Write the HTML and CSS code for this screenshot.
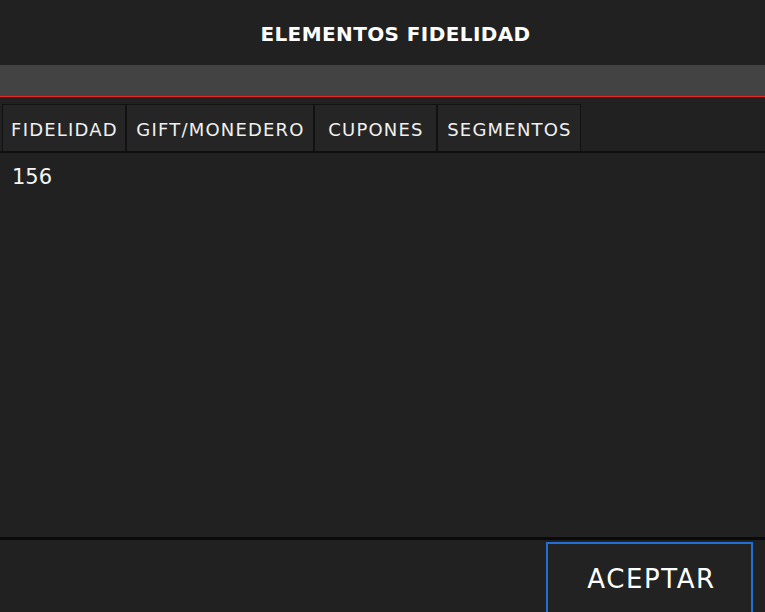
FILE: index.html
```html
<!DOCTYPE html>
<html lang="es">
<head>
<meta charset="utf-8">
<title>Elementos Fidelidad</title>
<link rel="stylesheet" href="styles.css">
</head>
<body>
<div class="dialog">
  <header class="header">
    <h1 class="title">ELEMENTOS FIDELIDAD</h1>
  </header>
  <div class="greybar"></div>
  <nav class="tabs">
    <div class="tab tab-fidelidad">FIDELIDAD</div>
    <div class="tab tab-gift">GIFT/MONEDERO</div>
    <div class="tab tab-cupones">CUPONES</div>
    <div class="tab tab-segmentos">SEGMENTOS</div>
  </nav>
  <main class="content">
    <div class="value">156</div>
  </main>
  <footer class="footer">
    <button class="btn-accept">ACEPTAR</button>
  </footer>
</div>
</body>
</html>
```
FILE: styles.css
```css
* { box-sizing: border-box; }
html, body {
  margin: 0;
  padding: 0;
  background: #212121;
  width: 765px;
  height: 612px;
  overflow: hidden;
}
.dialog {
  display: flex;
  flex-direction: column;
  height: 612px;
  font-family: "DejaVu Sans", "Liberation Sans", sans-serif;
  color: #f2f2f2;
}
.header {
  height: 65px;
  display: flex;
  align-items: center;
  justify-content: center;
  background: #212121;
}
.title {
  margin: 0;
  font-size: 20px;
  font-weight: bold;
  color: #ffffff;
  letter-spacing: 0.4px;
  padding-left: 26px;
  padding-top: 3px;
}
.greybar {
  height: 32px;
  background: #434343;
  border-bottom: 1px solid #e8262a;
}
.tabs {
  display: flex;
  padding: 7px 0 0 2px;
  border-bottom: 2px solid #0f0f0f;
}
.tab {
  height: 47px;
  display: flex;
  align-items: center;
  justify-content: center;
  padding: 2px 0 0 1px;
  background: #252525;
  border: 1px solid #121212;
  border-bottom: none;
  font-size: 18px;
  letter-spacing: 1.2px;
  color: #f0f0f0;
  white-space: nowrap;
}
.tab-fidelidad { width: 124px; }
.tab-gift { width: 188px; }
.tab-cupones { width: 123px; }
.tab-segmentos { width: 144px; }
.content {
  flex: 1;
  padding: 12px 12px;
  border-bottom: 3px solid #0a0a0a;
}
.value {
  font-size: 21px;
  color: #f4f4f4;
}
.footer {
  height: 72px;
  display: flex;
  justify-content: flex-end;
  padding: 2px 12px 0 0;
}
.btn-accept {
  width: 207px;
  height: 74px;
  background: #222222;
  border: 2px solid #1f6fd6;
  color: #ffffff;
  font-family: "DejaVu Sans", "Liberation Sans", sans-serif;
  font-size: 26px;
  letter-spacing: 1.6px;
  padding: 0 0 0 4px;
  text-align: center;
}
```
